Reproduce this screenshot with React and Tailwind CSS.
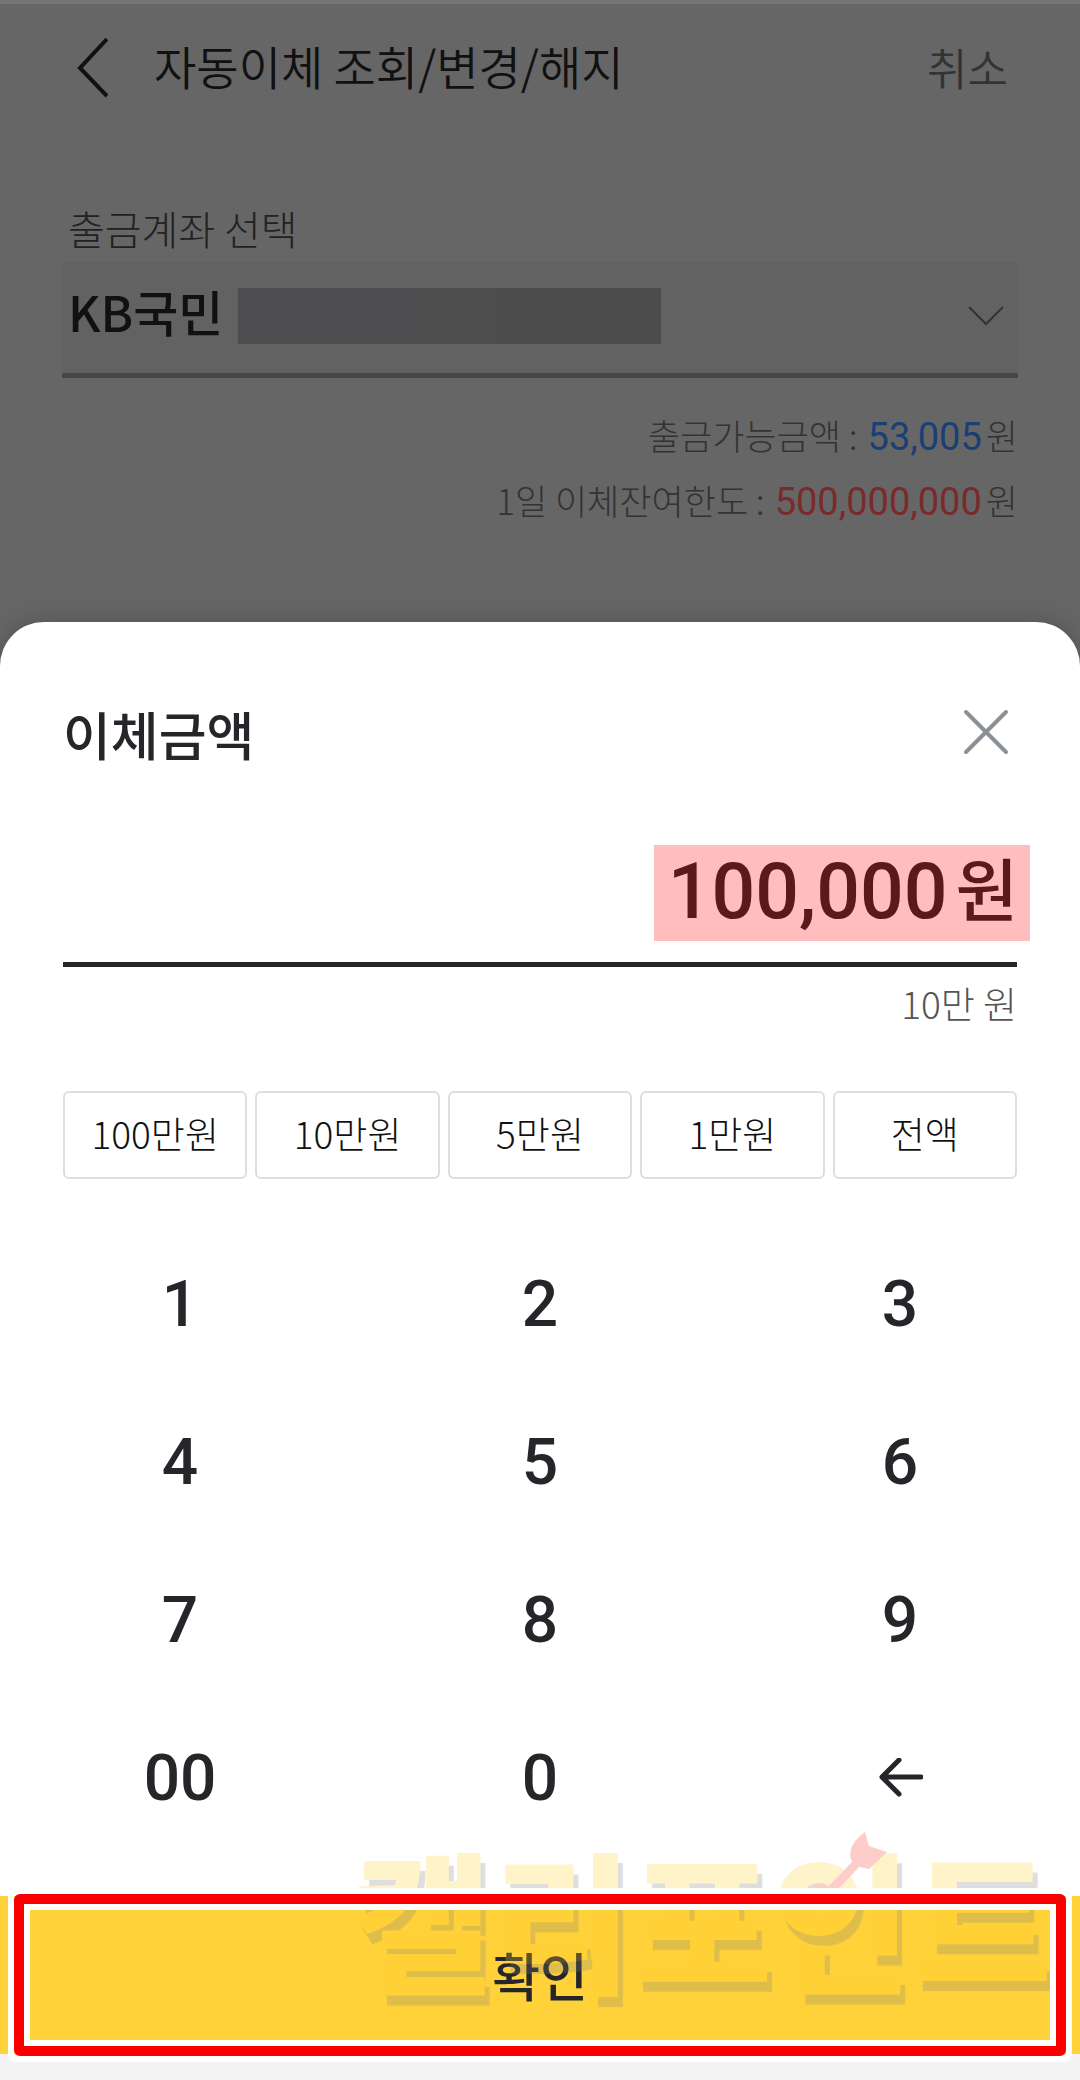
import { useState } from "react";

const QUICK_AMOUNTS = [
  { label: "100만원", value: 1000000 },
  { label: "10만원", value: 100000 },
  { label: "5만원", value: 50000 },
  { label: "1만원", value: 10000 },
  { label: "전액", value: 53005 },
];

const KEYS = ["1", "2", "3", "4", "5", "6", "7", "8", "9", "00", "0", "back"];

function ChevronLeft() {
  return (
    <svg width="32" height="62" viewBox="0 0 32 62" fill="none" stroke="#111" strokeWidth="4">
      <path d="M31 3 4 32l27 28" />
    </svg>
  );
}

function ChevronDown() {
  return (
    <svg width="36" height="20" viewBox="0 0 36 20" fill="none" stroke="#333" strokeWidth="2">
      <path d="M1 1l17 17L35 1" />
    </svg>
  );
}

function CloseIcon() {
  return (
    <svg width="46" height="46" viewBox="0 0 46 46" fill="none" stroke="#8b9097" strokeWidth="4" strokeLinecap="round">
      <path d="M3 3l40 40M43 3L3 43" />
    </svg>
  );
}

function BackspaceArrow() {
  return (
    <svg width="46" height="42" viewBox="0 0 46 42" fill="none" stroke="#26262a" strokeWidth="5" strokeLinecap="round" strokeLinejoin="round">
      <path d="M22 2 5 19l17 17M5 19h39" />
    </svg>
  );
}

function BalanceRow({ label, amount, amountClass }) {
  return (
    <div className="flex items-center justify-end h-[65px] text-[35px] font-light text-[#333]">
      <dt className="pb-1">{label} :</dt>
      <dd className="flex items-center">
        <span className={`ml-2.5 mr-1 font-[Roboto] text-[38px] font-normal ${amountClass}`}>{amount}</span>
        <span className="pb-1">원</span>
      </dd>
    </div>
  );
}

function Watermark() {
  return (
    <div className="absolute right-[28px] -top-[52px] pointer-events-none opacity-25" aria-hidden="true">
      <span className="block text-[152px] leading-[144px] font-black text-[#ffd030] [text-shadow:5px_10px_1px_#808080]">
        캘리포인트
      </span>
      <svg className="absolute right-[162px] -top-4" width="90" height="84" viewBox="0 0 90 84" fill="#f8402c">
        <path d="M65 4l4 14 18 6-18 17-10-2-32 34-7-6 32-33c-5-12 2-22 13-30z" />
        <circle cx="20" cy="68" r="12" />
      </svg>
    </div>
  );
}

export default function App() {
  const [amount, setAmount] = useState(100000);

  const handleKey = (key) => {
    if (key === "back") {
      setAmount(Math.floor(amount / 10));
      return;
    }
    setAmount(Number(`${amount}${key}`));
  };

  return (
    <div className="min-h-screen flex flex-col bg-[#666] font-['Noto_Sans_CJK_KR',sans-serif] text-[#26262a]">
      {/* Dimmed page behind the sheet */}
      <div className="border-t-4 border-[#757575] px-[62px] pb-[87px]">
        <header className="flex items-center h-[126px] px-3.5">
          <button aria-label="뒤로">
            <ChevronLeft />
          </button>
          <h1 className="ml-[46px] pb-1 text-[46px] font-[350] text-[#111]">자동이체 조회/변경/해지</h1>
          <button className="ml-auto -mr-1 text-[44px] font-[350] text-[#333]">취소</button>
        </header>

        <label htmlFor="account" className="block mt-[74px] ml-1.5 text-[40px] leading-[48px] font-light text-[#222]">
          출금계좌 선택
        </label>
        <div className="relative mt-2.5 h-[116px] border-b-5 border-[#47474b] bg-[#626262]">
          <select id="account" className="w-full h-full pl-1.5 pb-3.5 appearance-none bg-transparent text-[49px] font-medium text-[#111]">
            <option>KB국민</option>
          </select>
          <div className="absolute left-44 top-[26px] w-[423px] h-14 bg-linear-to-r from-[#4e4e51] to-[#4c4c4c]" />
          <div className="absolute right-3.5 top-11 pointer-events-none">
            <ChevronDown />
          </div>
        </div>

        <dl className="mt-[27px]">
          <BalanceRow label="출금가능금액" amount="53,005" amountClass="text-[#1b3f74]" />
          <BalanceRow label="1일 이체잔여한도" amount="500,000,000" amountClass="text-[#7a2a2a]" />
        </dl>
      </div>

      {/* Amount sheet */}
      <section className="grow flex flex-col rounded-t-[44px] bg-white shadow-[0_0_24px_#0003]">
        <div className="px-[63px] pt-[60px]">
          <div className="flex items-center justify-between h-[100px]">
            <h2 className="pt-1 text-[52px] font-medium">이체금액</h2>
            <button aria-label="닫기" className="mr-2">
              <CloseIcon />
            </button>
          </div>

          <div className="flex justify-end mt-[63px] pb-[21px] border-b-5 border-[#262628]">
            <label className="flex items-center justify-end h-24 w-[376px] -mr-[13px] pr-3 bg-[#ffbdbd] text-[#5c191c]">
              <input
                aria-label="이체금액"
                inputMode="none"
                readOnly
                value={amount.toLocaleString("ko-KR")}
                className="min-w-0 w-full bg-transparent text-right font-[Roboto] text-[77px] font-medium outline-none"
              />
              <span className="ml-2 pb-3 text-[68px] font-medium">원</span>
            </label>
          </div>
          <p className="mt-3 text-right text-[37px] leading-[48px] font-light text-[#555]">10만 원</p>

          <div className="grid grid-cols-5 gap-2 mt-16">
            {QUICK_AMOUNTS.map(({ label, value }) => (
              <button
                key={label}
                onClick={() => setAmount(value)}
                className="h-[88px] pb-0.5 rounded-md border-2 border-[#dedede] text-[37px] font-light text-[#111]"
              >
                {label}
              </button>
            ))}
          </div>
        </div>

        <div className="grid grid-cols-3 mt-[47px]">
          {KEYS.map((key) => (
            <button
              key={key}
              onClick={() => handleKey(key)}
              aria-label={key === "back" ? "지우기" : undefined}
              className="flex items-center justify-center h-[158px] font-[Roboto] text-[64px] font-medium"
            >
              {key === "back" ? <BackspaceArrow /> : key}
            </button>
          ))}
        </div>

        <div className="relative mt-[38px] bg-[#f4f4f4] pb-[26px]">
          <button className="block w-full h-[158px] bg-[#ffd239] text-[52px] font-medium">확인</button>
          <Watermark />
          {/* Highlight frame round the confirm button */}
          <div className="absolute inset-x-2 -top-2 h-[174px] rounded-lg border-6 border-white pointer-events-none">
            <div className="h-full rounded-md border-10 border-[#fb0000]">
              <div className="h-full border-6 border-white" />
            </div>
          </div>
        </div>
      </section>
    </div>
  );
}
